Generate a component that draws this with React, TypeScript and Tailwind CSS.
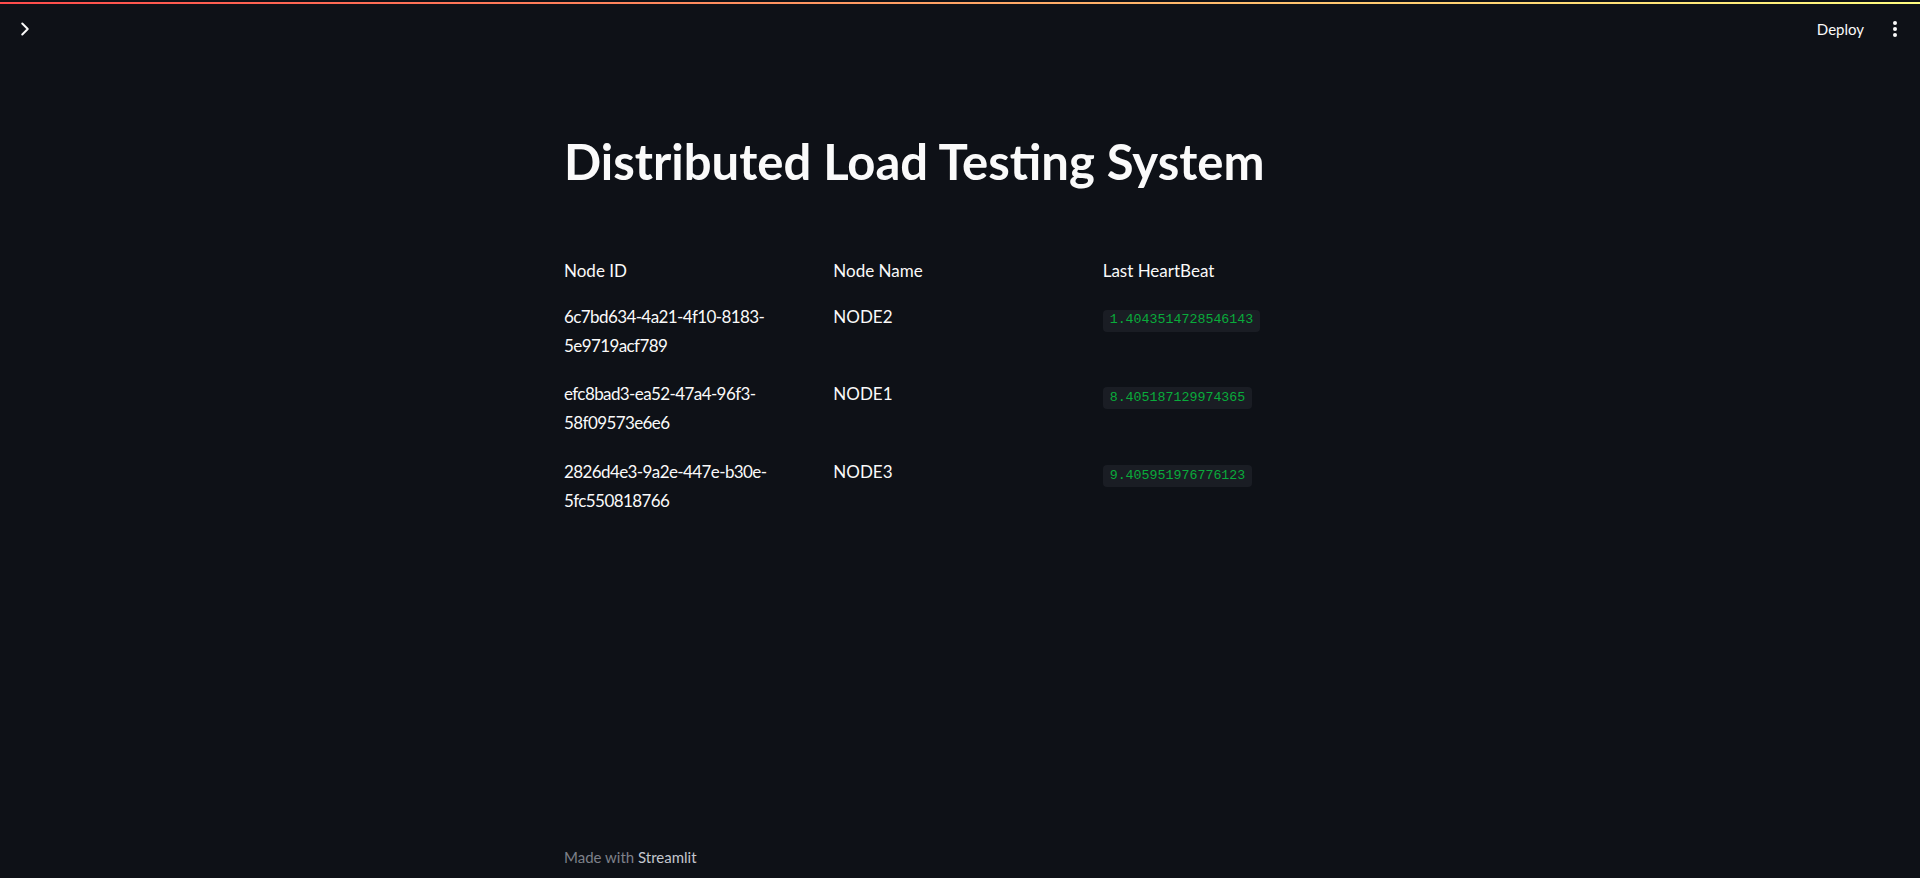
import React from "react";

const rows = [
  { id1: "6c7bd634-4a21-4f10-8183-", id2: "5e9719acf789", name: "NODE2", hb: "1.4043514728546143" },
  { id1: "efc8bad3-ea52-47a4-96f3-", id2: "58f09573e6e6", name: "NODE1", hb: "8.405187129974365" },
  { id1: "2826d4e3-9a2e-447e-b30e-", id2: "5fc550818766", name: "NODE3", hb: "9.405951976776123" },
];

export default function App() {
  return (
    <div
      className="relative flex h-[878px] w-full flex-col overflow-hidden bg-[#0e1117] text-[#fafafa]"
      style={{ fontFamily: "Lato, 'Noto Sans', sans-serif" }}
    >
      <div className="pt-[2px]">
        <div className="h-[2px] w-full bg-[linear-gradient(90deg,#ff4b4b,#fffd80)]" />
      </div>
      <header className="flex h-[50px] items-center justify-between pl-[14px] pr-[19px]">
        <svg width="22" height="22" viewBox="0 0 24 24" fill="none" stroke="#fafafa" strokeWidth="2.2" strokeLinecap="round" strokeLinejoin="round">
          <path d="m9 18 6-6-6-6" />
        </svg>
        <div className="flex items-center gap-[25px]">
          <span className="text-[15px]">Deploy</span>
          <svg width="12" height="20" viewBox="0 0 12 20" fill="#fafafa">
            <circle cx="6" cy="4" r="2" />
            <circle cx="6" cy="10" r="2" />
            <circle cx="6" cy="16" r="2" />
          </svg>
        </div>
      </header>
      <main className="mx-auto flex w-[792px] flex-1 flex-col pt-[78px]">
        <h1 className="text-[49px] font-bold leading-[59px]">Distributed Load Testing System</h1>
        <div className="mt-[66px] grid grid-cols-3 gap-x-[16px] text-[17px] leading-[28.8px]">
          <div>Node ID</div>
          <div>Node Name</div>
          <div>Last HeartBeat</div>
        </div>
        <div className="mt-[17px] grid grid-cols-3 gap-x-[16px] gap-y-[20px] text-[17px] leading-[28.8px]">
          {rows.map((r) => (
            <React.Fragment key={r.name}>
              <div className="tracking-[-0.6px]">
                {r.id1}
                <br />
                {r.id2}
              </div>
              <div>{r.name}</div>
              <div className="flex items-start pt-[7px]">
                <span
                  className="flex h-[22px] items-center rounded-[4px] bg-[#1a1d24] px-[7px] text-[13.3px] text-[#09ab3b]"
                  style={{ fontFamily: "'Liberation Mono', 'DejaVu Sans Mono', monospace" }}
                >
                  {r.hb}
                </span>
              </div>
            </React.Fragment>
          ))}
        </div>
      </main>
      <footer className="mx-auto w-[792px] pb-[9px] text-[15px] leading-[24px]">
        <span className="text-[#7d8089]">Made with </span>
        <span className="text-[#c4c7ce]">Streamlit</span>
      </footer>
    </div>
  );
}
